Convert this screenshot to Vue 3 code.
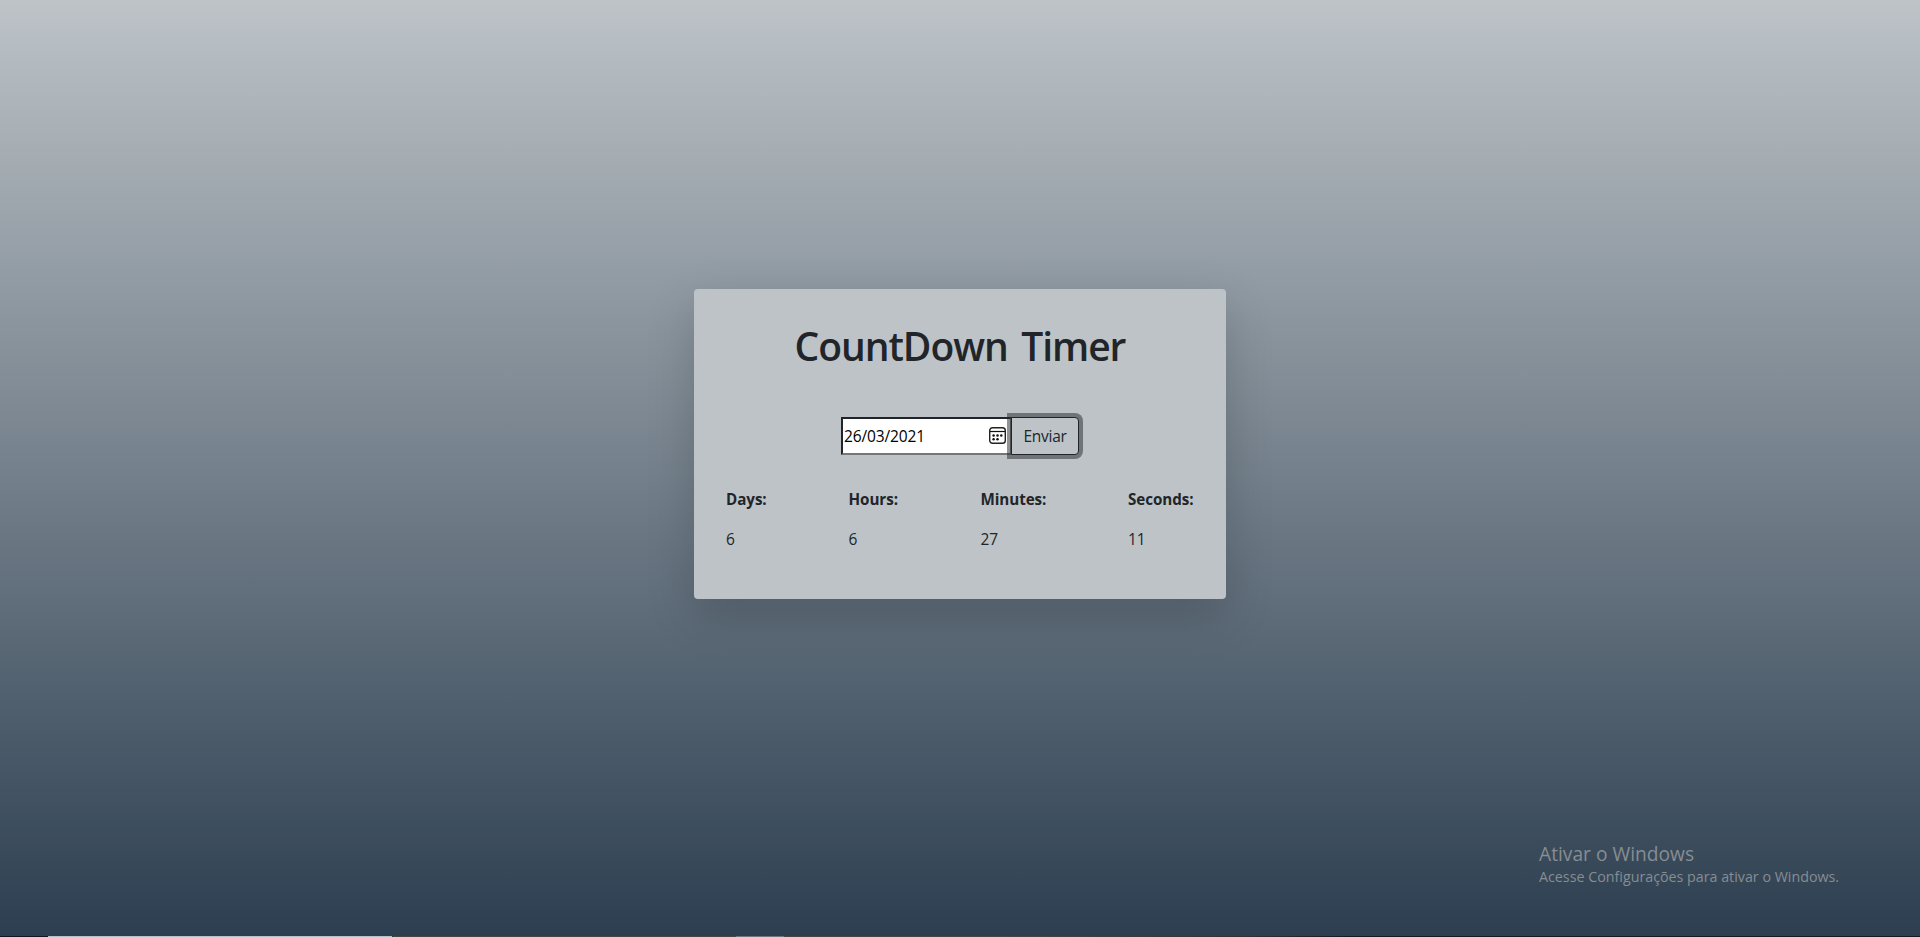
<script setup>
const units = [
  { label: 'Days:', value: 6, name: 'days' },
  { label: 'Hours:', value: 6, name: 'hours' },
  { label: 'Minutes:', value: 27, name: 'minutes' },
  { label: 'Seconds:', value: 11, name: 'seconds' },
]
</script>

<template>
  <main class="page">
    <section class="card">
      <h1>CountDown Timer</h1>
      <form class="group" @submit.prevent>
        <div class="date">
          <span>26/03/2021</span>
          <svg class="calendar" width="17" height="17" viewBox="0 0 17 17">
            <rect x="0.7" y="0.7" width="15.6" height="15.6" rx="2.8" fill="none" stroke="#222" stroke-width="1.4" />
            <path d="M1 4.5H16" stroke="#111" stroke-width="1.2" />
            <g fill="#111">
              <circle cx="4.6" cy="8.6" r="1.25" /><circle cx="8.5" cy="8.6" r="1.25" /><circle cx="12.3" cy="8.6" r="1.25" />
              <circle cx="4.6" cy="12.2" r="1.25" /><circle cx="8.5" cy="12.2" r="1.25" />
            </g>
          </svg>
        </div>
        <button class="send" type="submit">Enviar</button>
      </form>
      <div class="units">
        <div v-for="u in units" :key="u.name" class="unit">
          <strong>{{ u.label }}</strong>
          <span class="value">{{ u.value }}</span>
        </div>
      </div>
    </section>

    <aside class="notice">
      <div class="notice-title">Ativar o Windows</div>
      <div class="notice-text">Acesse Configurações para ativar o Windows.</div>
    </aside>
    <div class="taskbar"><i class="light"></i><i class="mid"></i></div>
  </main>
</template>

<style>
html, body { margin: 0; overflow: hidden; }
</style>

<style scoped>
* { box-sizing: border-box; }
.page {
  position: relative;
  height: 937px;
  padding-top: 289px;
  background: linear-gradient(to bottom, #bdc3c7, #2c3e50);
  color: #212529;
  font: 16px/24px "Segoe UI", "Open Sans", "Noto Sans", sans-serif;
}
.card {
  width: 532px;
  height: 310px;
  margin: 0 auto;
  padding: 33px 32px 0;
  border-radius: 4px;
  background: #bdc3c7;
  box-shadow: 0 16px 48px rgba(0, 0, 0, 0.175);
}
h1 {
  margin: 0;
  font-size: 39px;
  line-height: 48px;
  font-weight: 600;
  letter-spacing: -1.05px;
  word-spacing: 4.5px;
  text-align: center;
  white-space: nowrap;
}
.group {
  display: flex;
  height: 38px;
  margin: 47px 0 0 115px;
}
.date {
  display: flex;
  align-items: center;
  justify-content: space-between;
  width: 171px;
  padding: 0 4px 0 1px;
  border: 2px solid;
  border-color: #212529 #767676 #767676 #212529;
  background: #fff;
  color: #000;
  font-size: 15.5px;
  letter-spacing: -0.13px;
}
.calendar { margin-bottom: 1px; }
.send {
  width: 68px;
  margin: 0 0 0 -1px;
  padding: 0;
  border: 1px solid #212529;
  border-radius: 0 4px 4px 0;
  background: #bdc3c7;
  color: #212529;
  font: inherit;
  font-size: 15.5px;
  letter-spacing: -0.25px;
  box-shadow: 0 0 0 4px rgba(33, 37, 41, 0.5);
}
.units {
  display: grid;
  grid-template-columns: 122.5px 132px 147.5px 66px;
  margin-top: 32px;
}
.unit { display: flex; flex-direction: column; gap: 16px; font-size: 15.2px; }
.unit strong { font-weight: 700; white-space: nowrap; letter-spacing: -0.06px; }
.value { font-size: 15.5px; letter-spacing: -0.13px; }
.notice {
  position: absolute;
  left: 1539px;
  top: 840px;
  color: #878d92;
  white-space: nowrap;
}
.notice-title { font-size: 19.2px; line-height: 28px; }
.notice-text { font-size: 14.27px; line-height: 18px; }
.taskbar {
  position: absolute;
  left: 0;
  right: 0;
  bottom: 0;
  display: flex;
  height: 1px;
  background: linear-gradient(to right, #15151f 392px, #4a4545 393px, #4a4545 1000px, #3a2d30 1250px, #191820 1350px);
}
.light { width: 344px; margin-left: 48px; background: #b9bfc6; }
.mid { width: 48px; margin-left: 344px; background: #72767c; }
</style>
